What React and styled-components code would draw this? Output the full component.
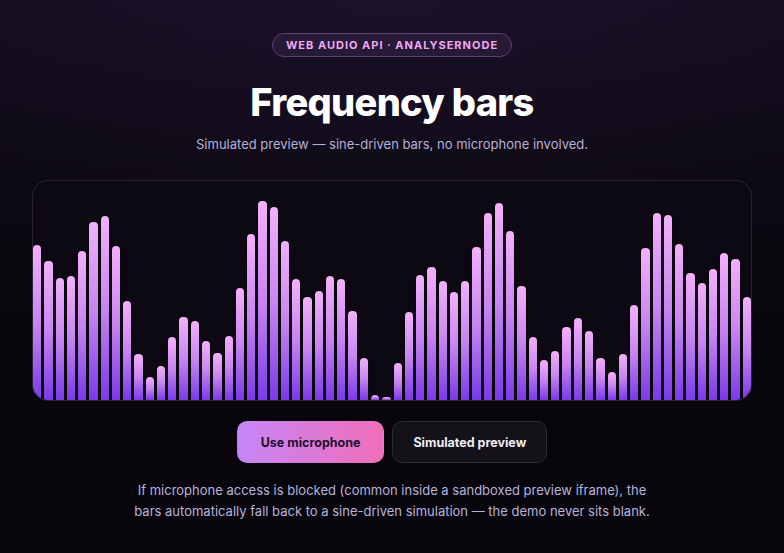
import React from 'react';
import styled, {createGlobalStyle} from 'styled-components';

const FONT = `Inter, "Noto Sans", "Liberation Sans", sans-serif`;

const BAR_TOPS = [
   245, 261, 278, 276, 251, 222, 216, 246, 301, 354,
   377, 366, 337, 317, 321, 341, 353, 336, 288, 234,
   201, 207, 241, 279, 297, 291, 276, 279, 311, 358,
   395, 397, 363, 312, 275, 267, 281, 292, 281, 247,
   213, 203, 231, 286, 337, 360, 351, 327, 318, 331,
   358, 372, 354, 305, 248, 213, 215, 244, 273, 283,
   269, 253, 259, 297,
];
const BAR_HEIGHTS = BAR_TOPS.map(t => 400 - t);

const GlobalStyle = createGlobalStyle`
   html, body {
      margin: 0;
      padding: 0;
      background: #08060c;
   }
   body {
      font-family: ${FONT};
      -webkit-font-smoothing: antialiased;
   }
`;

const Page = styled.main`
   min-height: 553px;
   box-sizing: border-box;
   padding: 33px 32px 30px;
   display: flex;
   flex-direction: column;
   align-items: center;
   background:
      radial-gradient(ellipse 80% 40% at 50% 0%, rgba(45, 25, 70, 0.35), rgba(20, 12, 30, 0) 100%),
      linear-gradient(180deg, #120d1b 0%, #08060c 65%);
`;

const Badge = styled.div`
   height: 24px;
   box-sizing: border-box;
   padding: 0 13px;
   display: flex;
   align-items: center;
   border-radius: 999px;
   border: 1px solid #5b3f70;
   background: #261a36;
   color: #f0a8f5;
   font-size: 11px;
   font-weight: 700;
   letter-spacing: 1px;
   text-transform: uppercase;
`;

const Title = styled.h1`
   margin: 23px 0 0;
   font-size: 38px;
   line-height: 44px;
   font-weight: 800;
   letter-spacing: -0.7px;
   color: #ffffff;
`;

const Subtitle = styled.p`
   margin: 10px 0 0;
   font-size: 13px;
   line-height: 20px;
   color: #b7b0d6;
`;

const Visualizer = styled.div`
   width: 100%;
   max-width: 720px;
   height: 221px;
   margin-top: 26px;
   box-sizing: border-box;
   border: 1px solid #2c2436;
   border-radius: 16px;
   background: #0c0912;
   overflow: hidden;
   display: flex;
   align-items: flex-end;
   gap: 3px;
`;

const Bar = styled.div`
   flex: 1;
   min-height: 3px;
   border-radius: 4px 4px 0 0;
   background: linear-gradient(180deg, #f3b0fb 0%, #c985f0 50%, #7a3ae8 100%);
   box-shadow: 0 0 0 0.5px rgba(0, 0, 0, 0.6);
`;

const Controls = styled.div`
   display: flex;
   gap: 8px;
   margin-top: 20px;
`;

const Button = styled.button`
   height: 42px;
   padding: 0 ${p => p.$primary ? 23 : 20}px;
   border-radius: 10px;
   font-family: ${FONT};
   font-size: 12.5px;
   font-weight: 700;
   cursor: pointer;
   border: 1px solid ${p => p.$primary ? 'transparent' : '#2e2a35'};
   background: ${p => p.$primary
      ? 'linear-gradient(90deg, #c685f7 0%, #f06fb8 100%)'
      : '#141218'};
   color: ${p => p.$primary ? '#1e1030' : '#efedf5'};
`;

const Note = styled.p`
   margin: 17px 0 0;
   text-align: center;
   white-space: nowrap;
   font-size: 13px;
   line-height: 21px;
   color: #b5b3dc;
`;

export default function App() {
   return (
      <>
         <GlobalStyle/>
         <Page>
            <Badge>Web Audio API · AnalyserNode</Badge>
            <Title>Frequency bars</Title>
            <Subtitle>Simulated preview — sine-driven bars, no microphone involved.</Subtitle>
            <Visualizer>
               {BAR_HEIGHTS.map((h, i) => (
                  <Bar key={i} style={{height: h}}/>
               ))}
            </Visualizer>
            <Controls>
               <Button $primary>Use microphone</Button>
               <Button>Simulated preview</Button>
            </Controls>
            <Note>
               If microphone access is blocked (common inside a sandboxed preview iframe), the
               <br/>
               bars automatically fall back to a sine-driven simulation — the demo never sits blank.
            </Note>
         </Page>
      </>
   );
}
